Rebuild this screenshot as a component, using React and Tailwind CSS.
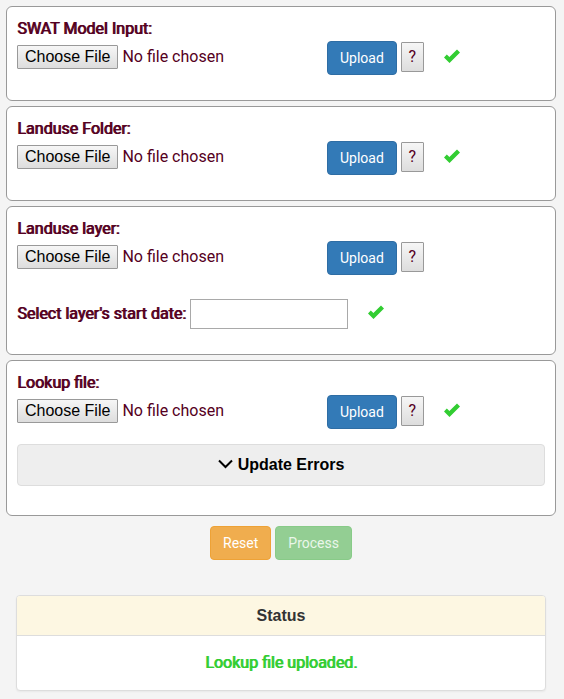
import { useId } from 'react';

const button = 'h-[34px] rounded border px-3 text-sm leading-5';

function Check() {
  return (
    <svg className="h-4 w-4 fill-[#32cd32]" viewBox="0 0 16 16" role="img" aria-label="Complete">
      <path d="M0 8.4 L2.8 5.6 L5.4 8 L13 0.6 L16 3.6 L5.5 14 Z" />
    </svg>
  );
}

function Label({ htmlFor, children }) {
  return (
    <label htmlFor={htmlFor} className="leading-6 text-shadow-[1px_0_currentColor]">
      {children}
    </label>
  );
}

function Card({ children }) {
  return <section className="rounded-md border border-[#999] bg-white p-[10px]">{children}</section>;
}

function FileRow({ label, done }) {
  const id = useId();
  return (
    <div>
      <div className="flex h-6">
        <Label htmlFor={id}>{label}</Label>
      </div>
      <div className="flex items-center gap-1">
        <input
          id={id}
          type="file"
          className="mr-[-4px] mb-[2px] h-6 w-[310px] leading-[22px] file:h-6 file:rounded-[1px] file:border file:border-solid file:border-[#999] file:bg-linear-to-b file:from-[#f6f6f6] file:to-[#dddddd] file:px-[7px] file:font-['Liberation_Sans',Arial,sans-serif] file:text-base file:leading-[22px] file:text-black"
        />
        <button type="button" className={`${button} border-[#2e6da4] bg-[#337ab7] text-white`}>
          Upload
        </button>
        <button
          type="button"
          aria-label={`Help: ${label}`}
          className="mb-[2px] h-[30px] w-[23px] rounded-[1px] border border-[#999] bg-linear-to-b from-[#f6f6f6] to-[#dddddd] text-center"
        >
          ?
        </button>
        {done && <span className="mb-[2px] ml-4"><Check /></span>}
      </div>
    </div>
  );
}

export default function App() {
  return (
    <main className="min-h-screen bg-[#f4f4f4] py-[6px] pr-2 pl-[6px] font-[Roboto,sans-serif] text-base text-[#550022]">
      <div className="flex flex-col gap-[5px]">
        <Card>
          <FileRow label="SWAT Model Input:" done />
          <div className="h-[15px]" />
        </Card>
        <Card>
          <FileRow label="Landuse Folder:" done />
          <div className="h-[15px]" />
        </Card>
        <Card>
          <FileRow label="Landuse layer:" />
          <div className="mt-6 mb-[15px] flex items-center gap-1">
            <Label htmlFor="start-date">Select layer's start date:</Label>
            <input id="start-date" type="text" className="h-[30px] w-[158px] border border-[#a9a9a9] bg-white px-1" />
            <span className="mb-[2px] ml-4"><Check /></span>
          </div>
        </Card>
        <Card>
          <FileRow label="Lookup file:" done />
          <button
            type="button"
            className="mt-[15px] mb-[19px] flex h-[42px] w-full items-center justify-center gap-1 rounded border border-[#ddd] bg-[#eee] font-['Liberation_Sans',Arial,sans-serif] font-bold text-black"
          >
            <svg className="h-4 w-4 fill-none stroke-black stroke-2" viewBox="0 0 16 16" aria-hidden="true">
              <path d="M1 3.5 L7.5 10 L14 3.5" />
            </svg>
            Update Errors
          </button>
        </Card>
      </div>

      <div className="mt-[10px] flex justify-center gap-1">
        <button type="button" className={`${button} border-[#eea236] bg-[#f0ad4e] text-white`}>Reset</button>
        <button type="button" disabled className={`${button} border-[#88cb88] bg-[#93ce93] text-[#eaf6ea]`}>Process</button>
      </div>

      <section className="mx-[10px] mt-[35px] overflow-hidden rounded border border-[#ddd] bg-white text-center shadow-xs">
        <h2 className="border-b border-[#ddd] bg-[#fdf7e2] py-2 font-['Liberation_Sans',Arial,sans-serif] leading-[23px] font-bold text-[#333]">
          Status
        </h2>
        <p className="py-[15px] leading-6 text-[#32cd32] text-shadow-[1px_0_currentColor]">Lookup file uploaded.</p>
      </section>
    </main>
  );
}
